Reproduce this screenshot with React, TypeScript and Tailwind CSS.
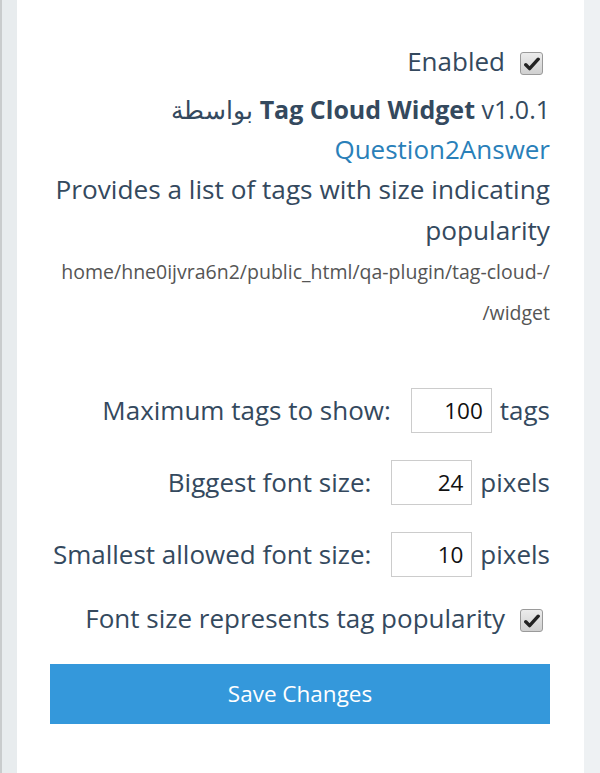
import React from "react";

function Check() {
  return (
    <span className="inline-flex h-[23px] w-[23px] items-center justify-center rounded-[3px] border border-[#9a9a9a] bg-gradient-to-b from-[#ececec] to-[#d0d0d0]">
      <svg width="16" height="14" viewBox="0 0 16 14">
        <path d="M1.8 7.8 L5.6 11.6 L14.2 2.2" fill="none" stroke="#222" strokeWidth="3.4" strokeLinecap="round" strokeLinejoin="round" />
      </svg>
    </span>
  );
}

function NumRow({ label, value, unit }: { label: string; value: string; unit: string }) {
  return (
    <div className="flex h-[45px] items-center justify-end">
      <span className="mr-[20px]">{label}</span>
      <span className="flex h-[45px] w-[81px] items-center justify-end border border-[#cccccc] bg-white pr-[8px] text-[22.5px] text-[#111]">{value}</span>
      <span className="ml-[8px]">{unit}</span>
    </div>
  );
}

export default function App() {
  return (
    <div className="flex h-[773px] w-[600px] bg-[#eef1f3]" style={{ fontFamily: '"Open Sans", "Noto Sans", sans-serif' }}>
      <div className="w-[2px] bg-[#c9cccd]" />
      <div className="w-[15px] bg-[#e8ecee]" />
      <div className="flex w-[567px] flex-col bg-white pr-[34px] text-right text-[26px] text-[#34495e]">
        <div className="mt-[41px] flex h-[40px] items-center justify-end gap-[15px]">
          <span>Enabled</span>
          <span className="mr-[7px]"><Check /></span>
        </div>
        <div className="mt-[8px] h-[40px] text-[25px] leading-[40px]">
          <span style={{ fontFamily: '"Noto Sans", sans-serif' }}>بواسطة</span> <b>Tag Cloud Widget</b> v1.0.1
        </div>
        <div className="h-[40px] leading-[40px] text-[#2980b9]">Question2Answer</div>
        <div className="text-[26.2px] leading-[41px]">Provides a list of tags with size indicating popularity</div>
        <div className="leading-[41px] text-[19.5px] text-[#555]">
          home/hne0ijvra6n2/public_html/qa-plugin/tag-cloud-/
          <br />
          /widget
        </div>
        <div className="mt-[55px] flex flex-col gap-[27px]">
          <NumRow label="Maximum tags to show:" value="100" unit="tags" />
          <NumRow label="Biggest font size:" value="24" unit="pixels" />
          <NumRow label="Smallest allowed font size:" value="10" unit="pixels" />
        </div>
        <div className="mt-[21px] flex h-[40px] items-center justify-end gap-[15px]">
          <span>Font size represents tag popularity</span>
          <span className="mr-[7px]"><Check /></span>
        </div>
        <div className="ml-[33px] mt-[26px] flex h-[60px] items-center justify-center bg-[#3498db] text-[22.5px] text-white">Save Changes</div>
      </div>
    </div>
  );
}
